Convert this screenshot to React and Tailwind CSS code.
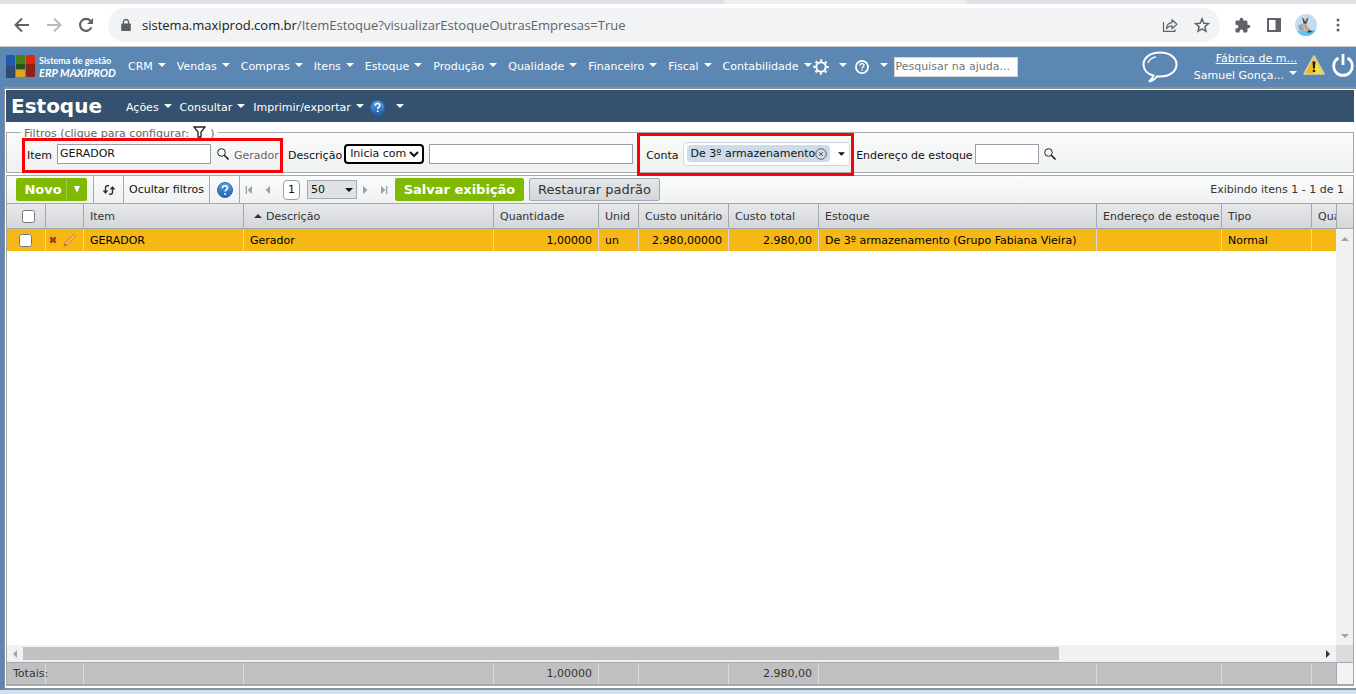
import { useState } from 'react';

const MENUS = ['CRM', 'Vendas', 'Compras', 'Itens', 'Estoque', 'Produção', 'Qualidade', 'Financeiro', 'Fiscal', 'Contabilidade'];

const COLUMNS = [
  { key: 'item', label: 'Item' },
  { key: 'descricao', label: 'Descrição', sorted: true },
  { key: 'quantidade', label: 'Quantidade', numeric: true },
  { key: 'unid', label: 'Unid' },
  { key: 'custoUnitario', label: 'Custo unitário', numeric: true },
  { key: 'custoTotal', label: 'Custo total', numeric: true },
  { key: 'estoque', label: 'Estoque' },
  { key: 'endereco', label: 'Endereço de estoque' },
  { key: 'tipo', label: 'Tipo' },
  { key: 'quantidadeMinima', label: 'Qua' },
];

const ROWS = [
  {
    item: 'GERADOR',
    descricao: 'Gerador',
    quantidade: '1,00000',
    unid: 'un',
    custoUnitario: '2.980,00000',
    custoTotal: '2.980,00',
    estoque: 'De 3º armazenamento (Grupo Fabiana Vieira)',
    endereco: '',
    tipo: 'Normal',
    quantidadeMinima: '',
  },
];

const TOTALS = { quantidade: '1,00000', custoTotal: '2.980,00' };

function Caret({ className = 'h-1 w-2' }) {
  return (
    <svg viewBox="0 0 8 4" className={`shrink-0 ${className}`} fill="currentColor" aria-hidden="true">
      <path d="M0 0h8L4 4z" />
    </svg>
  );
}

function SearchIcon() {
  return (
    <svg viewBox="0 0 12 12" className="size-3" fill="none" stroke="#222" aria-hidden="true">
      <circle cx="4.500" cy="4.500" r="3.800" strokeWidth="1" />
      <path d="M7.300 7.300l4.200 4.200" strokeWidth="1.600" />
    </svg>
  );
}

function HelpBall({ className }) {
  return (
    <svg viewBox="0 0 16 16" className={className} aria-hidden="true">
      <defs>
        <linearGradient id="ball" x1="0" y1="0" x2="0" y2="1">
          <stop offset="0" stopColor="#5fa3dd" />
          <stop offset="1" stopColor="#1c60b4" />
        </linearGradient>
      </defs>
      <circle cx="8" cy="8" r="7.500" fill="url(#ball)" stroke="#2a67ad" />
      <path d="M5.500 6.200C5.500 4.600 6.600 3.800 8 3.800s2.500.8 2.500 2.100c0 1.700-2.300 1.800-2.300 3.700" fill="none" stroke="#fff" strokeWidth="1.600" />
      <circle cx="8.200" cy="11.900" r="1" fill="#fff" />
    </svg>
  );
}

function Highlight({ className }) {
  return <span className={`pointer-events-none absolute z-10 border-3 border-[#fb0007] ${className}`} />;
}

function BrowserBar() {
  return (
    <div className="border-b border-[#c9c9c9] bg-white text-[#5f6368]">
      <div className="flex h-1 bg-[#dee1e6]">
        <span className="ml-[724px] w-[243px] bg-[#eceef1]" />
      </div>
      <div className="flex h-[42px] items-center pl-[14px] pr-[9px]">
        <button aria-label="Voltar" className="mr-4">
          <svg viewBox="0 0 16 16" className="size-4" fill="none" stroke="currentColor" strokeWidth="2">
            <path d="M15 8H2M8 1.500L1.500 8 8 14.500" />
          </svg>
        </button>
        <button aria-label="Avançar" className="mr-4 text-[#b9bbbe]">
          <svg viewBox="0 0 16 16" className="size-4" fill="none" stroke="currentColor" strokeWidth="2">
            <path d="M1 8h13M8 1.500L14.500 8 8 14.500" />
          </svg>
        </button>
        <button aria-label="Recarregar" className="mr-[14px]">
          <svg viewBox="0 0 16 16" className="size-4" fill="none" stroke="currentColor" strokeWidth="2.200">
            <path d="M13.500 10.400A6 6 0 1 1 12.600 3.900" />
            <path d="M15 1v6H9z" fill="currentColor" stroke="none" />
          </svg>
        </button>
        <div className="flex h-[34px] flex-1 items-center rounded-full bg-[#f1f3f4] pl-[13px] pr-[10px]">
          <svg viewBox="0 0 10 12" className="mr-[11px] h-3 w-[10px]" fill="#5a5d61" aria-hidden="true">
            <path d="M1 4.500h8a.8.8 0 0 1 .8.8v5.900a.8.8 0 0 1-.8.8H1a.8.8 0 0 1-.8-.8V5.300a.8.8 0 0 1 .8-.8z" />
            <path d="M2.500 5V3a2.500 2.500 0 0 1 5 0v2" fill="none" stroke="#5a5d61" strokeWidth="1.300" />
          </svg>
          <span className="flex-1 font-['Open_Sans',sans-serif] text-[13px]">
            <span className="text-[#202124]">sistema.maxiprod.com.br</span>
            /ItemEstoque?visualizarEstoqueOutrasEmpresas=True
          </span>
          <button aria-label="Compartilhar" className="mr-4">
            <svg viewBox="0 0 16 16" className="size-4" fill="none" stroke="currentColor" strokeWidth="1.200">
              <path d="M1.500 5v9.400H13V12.500" />
              <path d="M4.500 11.500c.3-3.800 2.500-5.800 5.500-5.900V2.800l4.900 4.500L10 11.700V8.800C7.500 8.800 6 9.700 4.500 11.500z" strokeLinejoin="round" />
            </svg>
          </button>
          <button aria-label="Favoritos">
            <svg viewBox="0 0 16 16" className="size-4" fill="none" stroke="currentColor" strokeWidth="1.500">
              <path d="M8 1.800l1.800 4.400 4.700.4-3.600 3.100 1.100 4.600L8 11.900l-4 2.400 1.100-4.600L1.500 6.600l4.700-.4z" />
            </svg>
          </button>
        </div>
        <button aria-label="Extensões" className="ml-[14px]">
          <svg viewBox="0 0 24 24" className="size-[17px]" fill="currentColor">
            <path d="M20.500 11H19V7a2 2 0 0 0-2-2h-4V3.500a2.500 2.500 0 0 0-5 0V5H4a2 2 0 0 0-2 2v3.800h1.500a2.700 2.700 0 0 1 0 5.400H2V20a2 2 0 0 0 2 2h3.800v-1.500a2.700 2.700 0 0 1 5.400 0V22H17a2 2 0 0 0 2-2v-4h1.500a2.500 2.500 0 0 0 0-5z" />
          </svg>
        </button>
        <button aria-label="Painel lateral" className="ml-4">
          <svg viewBox="0 0 14 14" className="size-[14px]">
            <path d="M0 0h14v14H0z" fill="currentColor" />
            <path d="M2 2h6.500v10H2z" fill="#fff" />
          </svg>
        </button>
        <button aria-label="Perfil" className="ml-[14px]">
          <svg viewBox="0 0 22 22" className="size-[22px]">
            <clipPath id="avatar">
              <circle cx="11" cy="11" r="11" />
            </clipPath>
            <g clipPath="url(#avatar)">
              <path d="M0 0h22v22H0z" fill="#c5dcec" />
              <path d="M0 17l22-1v6H0z" fill="#5ac8ee" />
              <path d="M3 11l5-1 1 7-5-1z" fill="#9ba3b2" />
              <path d="M8 4l1.500 2h1.500L12.500 4l.2 4-1.200 3 4 5-1 2h-4L9 13 8 8z" fill="#c9a68c" />
              <path d="M7 3l2.500 3-1 2zM13.500 3L11 6l1.200 1.500zM8.500 7.500h3v2h-3zM14 16l4 2-6 .8z" fill="#3b3439" />
            </g>
          </svg>
        </button>
        <button aria-label="Mais opções" className="ml-3">
          <svg viewBox="0 0 18 18" className="size-[18px]" fill="currentColor">
            <circle cx="9" cy="4" r="1.500" />
            <circle cx="9" cy="9" r="1.500" />
            <circle cx="9" cy="14" r="1.500" />
          </svg>
        </button>
      </div>
    </div>
  );
}

function Logo() {
  return (
    <a href="#" className="flex w-[122px] shrink-0 items-center">
      <svg viewBox="0 0 29 23" className="mr-[4px] h-[23px] w-[29px]" aria-hidden="true">
        <rect width="9" height="23" rx="1.500" fill="#2458ae" />
        <path d="M0 11h9v10.500A1.500 1.500 0 0 1 7.500 23h-6A1.500 1.500 0 0 1 0 21.500z" fill="#2c4a72" />
        <rect x="10" width="9" height="14" rx="1.500" fill="#40801d" />
        <path d="M10 9h9v5h-9z" fill="#24551b" />
        <rect x="10" y="15" width="9" height="7" rx="1.500" fill="#e5a41c" />
        <rect x="20" width="9" height="22" rx="1.500" fill="#d92a10" />
        <path d="M20 9h9v11.500a1.500 1.500 0 0 1-1.500 1.500h-6a1.500 1.500 0 0 1-1.500-1.500z" fill="#8f2218" />
      </svg>
      <span className="whitespace-nowrap font-['Lato',sans-serif] font-bold leading-3">
        <span className="block text-[9px]">Sistema de gestão</span>
        <span className="block text-[11px] italic">ERP MAXIPROD</span>
      </span>
    </a>
  );
}

function TopNav() {
  return (
    <header className="flex h-10 items-center bg-[#5c87b2] pb-px pl-[6px] pr-[2px] text-white">
      <Logo />
      <nav className="flex items-center gap-[11px]">
        {MENUS.map((name) => (
          <button key={name} className="flex items-center gap-[5px]">
            {name}
            <Caret className="mb-1 h-1 w-2" />
          </button>
        ))}
      </nav>
      <button aria-label="Configurações" className="ml-px flex items-center gap-[10px]">
        <svg viewBox="0 0 16 16" className="size-4" fill="none" stroke="currentColor">
          <circle cx="8" cy="8" r="4.700" strokeWidth="2" />
          <circle cx="8" cy="8" r="6.600" strokeWidth="2.200" strokeDasharray="2.200 2.983" strokeDashoffset="1.100" />
        </svg>
        <Caret className="mb-1 h-1 w-2" />
      </button>
      <button aria-label="Ajuda" className="ml-2 flex items-center gap-[11px]">
        <svg viewBox="0 0 16 16" className="size-[14px]" fill="none" stroke="currentColor">
          <circle cx="8" cy="8" r="6.900" strokeWidth="2" />
          <path d="M5.700 6.300C5.700 4.900 6.700 4.200 8 4.200s2.300.7 2.300 1.900c0 1.600-2.200 1.700-2.200 3.500M8.100 10.700v1.500" strokeWidth="1.500" />
        </svg>
        <Caret className="mb-1 h-1 w-2" />
      </button>
      <input
        aria-label="Pesquisar na ajuda"
        placeholder="Pesquisar na ajuda..."
        className="ml-[6px] h-5 w-[124px] border border-[#d5d5d5] bg-white px-px text-black placeholder:text-[#757575]"
      />
      <button aria-label="Mensagens" className="ml-auto mr-4">
        <svg viewBox="0 0 36 32" className="h-8 w-9" fill="none" stroke="currentColor">
          <path d="M11.500 24.500C5 23 1.500 18.500 1.500 13.500 1.500 6.500 8.500 1.500 18 1.500s16.500 5 16.500 12-7 12-16.500 12c-1 0-2 0-3-.2-2 3-4.500 4.700-8 5.200 2-1.500 3.700-3.500 4.500-6z" strokeWidth="2" />
          <path d="M6 12c1-3 4-5.500 8-6.200" strokeWidth="1.300" />
        </svg>
      </button>
      <div className="mr-[6px] text-right leading-[17px]">
        <a href="#" className="block underline">Fábrica de m...</a>
        <button className="flex items-center gap-[5px]">
          Samuel Gonça...
          <Caret className="mb-1 h-1 w-2" />
        </button>
      </div>
      <button aria-label="Avisos" className="mb-1 mr-[7px]">
        <svg viewBox="0 0 22 20" className="h-5 w-[22px]">
          <path d="M11 1l10 18H1z" fill="#f0b818" stroke="#d9cfb0" strokeWidth="1.600" strokeLinejoin="round" />
          <path d="M11 3l8 15h-8z" fill="#f5e13a" />
          <path d="M9.500 6.500h3l-.6 7h-1.800zM9.800 14.700h2.400v2.300H9.800z" fill="#1c1a18" />
        </svg>
      </button>
      <button aria-label="Sair" className="mb-1">
        <svg viewBox="0 0 22 24" className="h-6 w-[22px]" fill="none" stroke="currentColor" strokeWidth="2.800">
          <path d="M6.500 5A9.300 9.300 0 1 0 15.500 5M11 1v11" />
        </svg>
      </button>
    </header>
  );
}

function TitleBar() {
  return (
    <div className="flex h-8 items-center bg-[#34526f] pl-[5px] text-white">
      <h1 className="mr-6 text-[20px] font-bold">Estoque</h1>
      <nav className="flex items-center gap-2 pt-[3px]">
        {['Ações', 'Consultar', 'Imprimir/exportar'].map((name) => (
          <button key={name} className="flex items-center gap-[5px]">
            {name}
            <Caret className="mb-1 h-1 w-2" />
          </button>
        ))}
      </nav>
      <button aria-label="Ajuda da tela" className="ml-[6px] flex items-center gap-[11px] pt-[3px]">
        <HelpBall className="size-[15px]" />
        <Caret className="mb-1 h-1 w-2" />
      </button>
    </div>
  );
}

function Filters() {
  const [item, setItem] = useState('GERADOR');
  const [descricao, setDescricao] = useState('');
  const [endereco, setEndereco] = useState('');

  return (
    <fieldset className="mt-1 border border-[#a3a9b1] bg-linear-to-b from-[#fafbfb] to-[#eff0f0]">
      <legend className="ml-[14px] flex h-3 items-center gap-1 px-[3px] text-[#666]">
        <span className="pt-1">Filtros (clique para configurar:</span>
        <svg viewBox="0 0 13 12" className="h-3 w-[13px]" fill="none" stroke="#222" strokeWidth="1.300" aria-hidden="true">
          <path d="M1 1h11L8 6v5H5V6z" />
        </svg>
        <span className="pt-1">)</span>
      </legend>
      <div className="flex h-[34px] items-center whitespace-nowrap pb-[3px] pl-[15px]">
        <div className="relative flex h-full w-[261px] shrink-0 items-center gap-[5px] pl-[5px]">
          <Highlight className="inset-x-0 top-0 -bottom-1" />
          <label htmlFor="item" className="mt-1">Item</label>
          <input
            id="item"
            value={item}
            onChange={(e) => setItem(e.target.value)}
            className="h-5 w-[154px] border border-[#999fa8] bg-white px-[2px]"
          />
          <button aria-label="Buscar item" className="ml-px"><SearchIcon /></button>
          <span className="mt-1 text-[#666]">Gerador</span>
        </div>
        <label htmlFor="descricao" className="ml-[5px] mt-1">Descrição</label>
        <select
          aria-label="Condição da descrição"
          className="ml-[2px] h-5 w-20 rounded border-2 border-black bg-white text-[11px]"
        >
          <option>Inicia com</option>
          <option>Contém</option>
        </select>
        <input
          id="descricao"
          value={descricao}
          onChange={(e) => setDescricao(e.target.value)}
          className="ml-[5px] h-5 w-[204px] border border-[#999fa8] bg-white px-[2px]"
        />
        <div className="relative ml-1 flex h-full w-[217px] shrink-0 items-center gap-1 pl-[9px]">
          <Highlight className="inset-x-0 -top-[5px] -bottom-[7px]" />
          <span className="mt-1">Conta</span>
          <div className="flex h-6 w-[167px] items-center rounded-sm border border-[#d3d7db] bg-white pl-[3px]">
            <span className="flex h-[17px] items-center rounded bg-[#cfdbe6] pl-1 pr-[3px]">
              De 3º armazenamento
              <button aria-label="Remover">
                <svg viewBox="0 0 12 12" className="size-3" fill="none" stroke="#59636e">
                  <circle cx="6" cy="6" r="5.300" />
                  <path d="M4 4l4 4M8 4L4 8" />
                </svg>
              </button>
            </span>
            <button aria-label="Abrir contas" className="ml-auto mr-1"><Caret className="h-1 w-[7px]" /></button>
          </div>
        </div>
        <label htmlFor="endereco" className="ml-[2px] mt-1">Endereço de estoque</label>
        <input
          id="endereco"
          value={endereco}
          onChange={(e) => setEndereco(e.target.value)}
          className="ml-[2px] h-5 w-16 border border-[#999fa8] bg-white px-[2px]"
        />
        <button aria-label="Buscar endereço" className="ml-[5px]"><SearchIcon /></button>
      </div>
    </fieldset>
  );
}

function PageArrow({ label, flip, end }) {
  return (
    <button aria-label={label} className="flex w-[18px] justify-center text-[#9da2aa]">
      <svg viewBox="0 0 8 8" className={`size-2 ${flip ? '-scale-x-100' : ''}`} fill="currentColor">
        <path d="M1 0l4.500 4L1 8z" />
        {end && <path d="M6 0h1.300v8H6z" />}
      </svg>
    </button>
  );
}

function Toolbar() {
  return (
    <div className="flex h-7 items-center border-b border-[#a3a9b1] bg-linear-to-b from-[#fafbfb] to-[#f0f1f2] pl-[9px] pr-[9px]">
      <div className="mr-[6px] flex h-[23px] w-[71px] overflow-hidden rounded-xs bg-[#7fb900] text-[13px] font-bold text-white">
        <button className="flex-1 border-r border-[#a0cc42] pl-1">Novo</button>
        <button aria-label="Mais opções de novo" className="flex w-5 items-center justify-center">
          <svg viewBox="0 0 6 7" className="h-[7px] w-[6px]" fill="currentColor">
            <path d="M0 0h6L3 7z" />
          </svg>
        </button>
      </div>
      <div className="flex h-full items-center whitespace-nowrap">
        <button aria-label="Atualizar" className="flex h-full w-[30px] items-center justify-center border-l border-[#a3a9b1]">
          <svg viewBox="0 0 14 10" className="h-[10px] w-[14px]" fill="none" stroke="#333" strokeWidth="1.400">
            <path d="M7 .8H5.500C4.200.8 3.500 1.500 3.500 2.800V7M7 9.200h1.500c1.300 0 2-.7 2-2V3" />
            <path d="M.6 5.500h5.800L3.500 9zM7.600 4.500h5.800L10.500 1z" fill="#333" stroke="none" />
          </svg>
        </button>
        <button className="h-full w-[86px] border-l border-[#a3a9b1]">Ocultar filtros</button>
        <button aria-label="Ajuda" className="flex h-full w-[31px] items-center justify-center border-x border-[#a3a9b1]">
          <HelpBall className="size-4" />
        </button>
      </div>
      <PageArrow label="Primeira página" flip end />
      <PageArrow label="Página anterior" flip />
      <button className="mx-[7px] h-5 w-[17px] shrink-0 rounded-sm border border-[#999fa8] bg-white">1</button>
      <div className="relative">
        <select aria-label="Itens por página" className="h-[19px] w-[50px] appearance-none border border-[#a3a9b1] bg-[#dfe2e5] pl-[3px]">
          <option>50</option>
          <option>100</option>
        </select>
        <Caret className="pointer-events-none absolute right-1 top-2 h-1 w-2" />
      </div>
      <PageArrow label="Próxima página" />
      <PageArrow label="Última página" end />
      <button className="ml-[2px] h-[23px] w-[129px] shrink-0 rounded-xs bg-[#7fb900] text-[13px] font-bold text-white">
        Salvar exibição
      </button>
      <button className="ml-[5px] h-[23px] w-[131px] shrink-0 rounded-xs border border-[#a3a9b1] bg-linear-to-b from-[#e4e6e8] to-[#d3d7db] text-[13px] text-[#333]">
        Restaurar padrão
      </button>
      <span className="ml-auto whitespace-nowrap text-[#333]">Exibindo itens 1 - 1 de 1</span>
    </div>
  );
}

function GridColumns() {
  return (
    <colgroup>
      <col className="w-[39px]" />
      <col className="w-[38px]" />
      <col className="w-[160px]" />
      <col className="w-[250px]" />
      <col className="w-[105px]" />
      <col className="w-[40px]" />
      <col className="w-[90px]" />
      <col className="w-[90px]" />
      <col className="w-[278px]" />
      <col className="w-[125px]" />
      <col className="w-[90px]" />
      <col />
    </colgroup>
  );
}

function Grid() {
  return (
    <section className="mt-[2px] flex flex-1 flex-col border border-b-2 border-[#a3a9b1] bg-white">
      <Toolbar />
      <div className="flex flex-1">
        <div className="min-w-0 flex-1 overflow-hidden">
          <table className="w-full min-w-[1400px] table-fixed border-separate border-spacing-0 whitespace-nowrap">
            <GridColumns />
            <thead className="text-left text-[#333]">
              <tr className="h-[25px] bg-linear-to-b from-[#e7e8ea] to-[#d3d6da]">
                <th className="border-b border-r border-[#a3a9b1] p-0 pl-[5px] text-center">
                  <input type="checkbox" aria-label="Selecionar todos" className="size-[13px] align-middle" />
                </th>
                <th className="border-b border-r border-[#a3a9b1] p-0" />
                {COLUMNS.map((col) => (
                  <th key={col.key} className="border-b border-r border-[#a3a9b1] p-0 pl-[6px] pt-[2px] font-normal">
                    {col.sorted && <Caret className="ml-1 mr-1 inline h-1 w-2 rotate-180 align-[2px]" />}
                    {col.label}
                  </th>
                ))}
              </tr>
            </thead>
            <tbody>
              {ROWS.map((row) => (
                <tr key={row.item} className="h-[22px] bg-[#f5b815] text-black">
                  <td className="border-r border-[#d8d8d8] p-0 pr-[2px] text-center">
                    <input type="checkbox" aria-label={`Selecionar ${row.item}`} className="size-[13px] align-middle" />
                  </td>
                  <td className="border-r border-[#d8d8d8] p-0">
                    <div className="flex items-center gap-[6px] pl-[3px]">
                      <button aria-label="Excluir">
                        <svg viewBox="0 0 8 8" className="size-2" stroke="#b3310c" strokeWidth="2.400">
                          <path d="M1.300 1.500l5.400 5M6.700 1.500l-5.400 5" />
                        </svg>
                      </button>
                      <button aria-label="Editar">
                        <svg viewBox="0 0 14 14" className="size-[14px]">
                          <path d="M1 13l1-3.500 8.500-8 2 2L4.300 12z" fill="#f7a35c" stroke="#d3781f" strokeWidth=".7" />
                          <path d="M1 13l.7-2.500L3.500 12.300z" fill="#8a6a4e" />
                          <path d="M3.500 10.500l7.500-7" stroke="#fbd0a0" strokeWidth=".8" />
                        </svg>
                      </button>
                    </div>
                  </td>
                  {COLUMNS.map((col) => (
                    <td
                      key={col.key}
                      className={`border-r border-[#d8d8d8] p-0 px-[6px] pt-px ${col.numeric ? 'text-right' : ''}`}
                    >
                      {row[col.key]}
                    </td>
                  ))}
                </tr>
              ))}
            </tbody>
          </table>
        </div>
        <div className="flex w-[17px] flex-col items-center bg-[#f1f1f1] text-[#a5a0a8]">
          <div className="h-[25px] w-full border-b border-l border-[#a3a9b1] bg-linear-to-b from-[#e7e8ea] to-[#d3d6da]" />
          <Caret className="mt-2 h-1 w-2 rotate-180" />
          <Caret className="mb-[7px] mt-auto h-1 w-2" />
        </div>
      </div>
      <div className="flex h-[17px] items-center bg-[#f1f1f1]">
        <Caret className="mx-1 h-1 w-2 rotate-90 text-[#a5a0a8]" />
        <div className="h-[13px] w-[77%] bg-[#c1c1c1]" />
        <Caret className="ml-auto mr-1 h-1 w-2 -rotate-90 text-[#333]" />
        <span className="h-full w-[17px] bg-[#dadde0]" />
      </div>
      <div className="flex border-t border-[#a3a9b1]">
        <div className="min-w-0 flex-1 overflow-hidden">
          <table className="w-full min-w-[1400px] table-fixed border-separate border-spacing-0 whitespace-nowrap">
            <GridColumns />
            <tbody>
              <tr className="h-[21px] bg-[#c0c0c0] text-[#333]">
                <th className="border-r border-[#dcdcdc] p-0 pl-[6px] text-left font-normal">Totais:</th>
                <td className="border-r border-[#dcdcdc] p-0" />
                {COLUMNS.map((col) => (
                  <td key={col.key} className="border-r border-[#dcdcdc] p-0 px-[6px] text-right">
                    {TOTALS[col.key]}
                  </td>
                ))}
              </tr>
            </tbody>
          </table>
        </div>
        <div className="w-[17px] border-l border-[#a3a9b1] bg-[#f3f3f3]" />
      </div>
    </section>
  );
}

export default function App() {
  return (
    <div className="flex min-h-screen flex-col bg-[#5c87b2] font-['DejaVu_Sans',Verdana,sans-serif] text-[11px] leading-[14px] text-[#111]">
      <BrowserBar />
      <TopNav />
      <main className="ml-1 flex flex-1 flex-col border-y-2 border-l border-[#8b8f96] bg-white pb-[2px] pl-px pr-[2px] pt-px">
        <TitleBar />
        <Filters />
        <Grid />
      </main>
      <div className="h-1 bg-[#cfe0f2]" />
    </div>
  );
}
